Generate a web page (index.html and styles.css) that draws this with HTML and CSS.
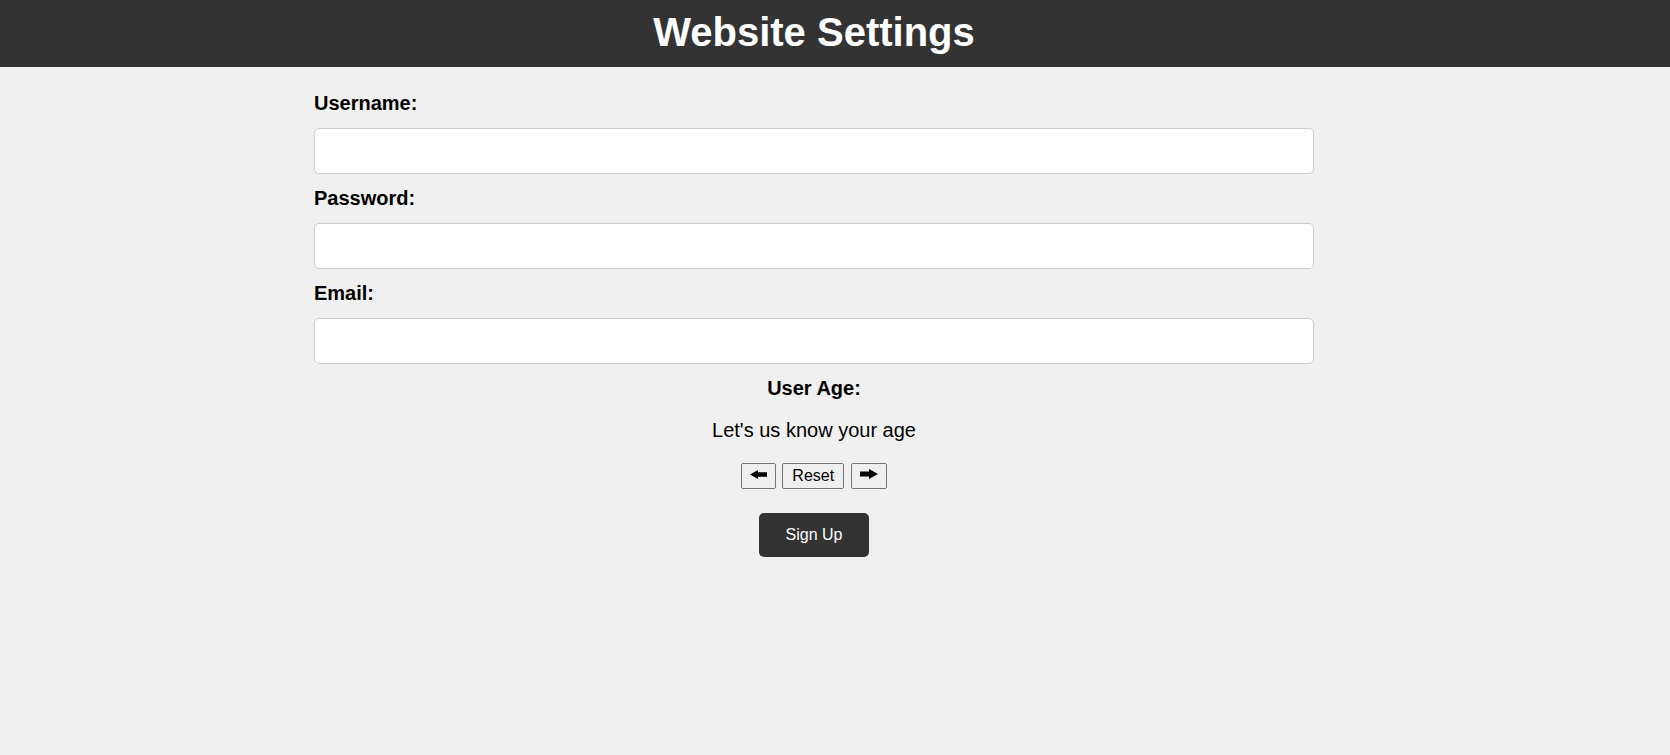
FILE: index.html
```html
<!DOCTYPE html>
<html lang="en">
<head>
<meta charset="utf-8">
<title>Website Settings</title>
<link rel="stylesheet" href="styles.css">
</head>
<body>
<header class="site-header">
  <h1 class="site-title">Website Settings</h1>
</header>
<main class="shell">
  <form class="settings-form">
    <label class="field-label" for="username">Username:</label>
    <input class="field-input" type="text" id="username">
    <label class="field-label" for="password">Password:</label>
    <input class="field-input" type="password" id="password">
    <label class="field-label" for="email">Email:</label>
    <input class="field-input" type="email" id="email">
    <section class="age">
      <div class="age-label">User Age:</div>
      <p class="age-text">Let's us know your age</p>
      <div class="age-controls">
        <button type="button" class="ctrl-btn arrow-btn" aria-label="Previous">
          <svg class="arrow" width="17" height="9" viewBox="0 0 17 9"><polygon points="0,4.5 8,0 8,2.3 17,2.3 17,6.7 8,6.7 8,9" fill="#000"/></svg>
        </button>
        <button type="button" class="ctrl-btn reset-btn">Reset</button>
        <button type="button" class="ctrl-btn arrow-btn arrow-next" aria-label="Next">
          <svg class="arrow" width="18" height="10" viewBox="0 0 18 10"><polygon points="18,5 9,0 9,2.6 0,2.6 0,7.4 9,7.4 9,10" fill="#000"/></svg>
        </button>
      </div>
      <button type="submit" class="submit-btn">Sign Up</button>
    </section>
  </form>
</main>
</body>
</html>
```

FILE: styles.css
```css
html, body {
  margin: 0;
  padding: 0;
}

body {
  background: #f0f0f0;
  font-family: "Liberation Sans", Arial, sans-serif;
  color: #000;
}

.site-header {
  background: #333333;
  height: 67px;
  padding-right: 42px;
  box-sizing: border-box;
}

.site-title {
  margin: 0;
  padding-top: 9px;
  font-size: 40px;
  line-height: 47px;
  font-weight: bold;
  color: #fff;
  text-align: center;
}

.shell {
  padding: 25px 42px 0 0;
}

.settings-form {
  width: 1000px;
  margin: 0 auto;
  display: flex;
  flex-direction: column;
}

.field-label {
  display: block;
  font-size: 20px;
  line-height: 23px;
  font-weight: bold;
  margin-bottom: 13px;
}

.field-input {
  display: block;
  box-sizing: border-box;
  width: 100%;
  height: 46px;
  margin: 0 0 13px 0;
  padding: 0 12px;
  border: 1px solid #cccccc;
  border-radius: 5px;
  background: #fff;
  font-family: inherit;
  font-size: 16px;
}

.age {
  display: flex;
  flex-direction: column;
  align-items: center;
}

.age-label {
  font-size: 20px;
  line-height: 23px;
  font-weight: bold;
}

.age-text {
  margin: 19px 0 21px 0;
  font-size: 20px;
  line-height: 23px;
}

.age-controls {
  display: flex;
  justify-content: center;
  gap: 6.5px;
}

.ctrl-btn {
  display: flex;
  align-items: center;
  justify-content: center;
  box-sizing: border-box;
  height: 26px;
  margin: 0;
  border: 1px solid #767676;
  border-radius: 2px;
  background: #efefef;
  color: #000;
  font-family: inherit;
  font-size: 16px;
  line-height: 20px;
}

.arrow-btn {
  padding: 0 8px;
}

.arrow-next {
  padding: 0 8px 0 8.5px;
}

.reset-btn {
  padding: 0 9px;
}

.arrow {
  display: block;
  margin-bottom: 4px;
}

.submit-btn {
  margin-top: 24px;
  padding: 12px 26.5px;
  border: none;
  border-radius: 5px;
  background: #333333;
  color: #fff;
  font-family: inherit;
  font-size: 16px;
  line-height: 20px;
}
```
